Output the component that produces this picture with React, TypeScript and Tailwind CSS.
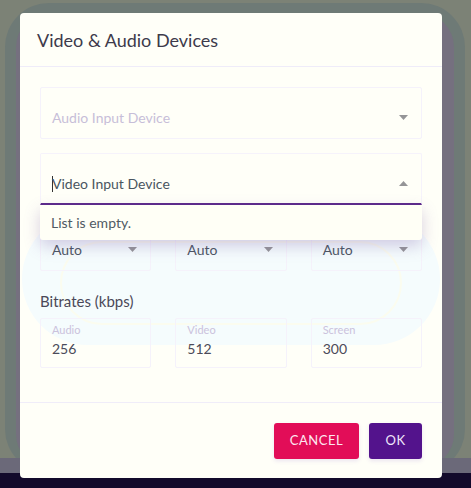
import React from 'react';

const font = { fontFamily: 'Lato, "Noto Sans", sans-serif' };

function Caret({ up = false }: { up?: boolean }) {
  return (
    <svg width="9" height="5" viewBox="0 0 9 5" className="shrink-0">
      <path d={up ? 'M0 5 L4.5 0 L9 5 Z' : 'M0 0 L4.5 5 L9 0 Z'} fill="#959597" />
    </svg>
  );
}

function SmallSelect({ value }: { value: string }) {
  return (
    <div className="h-[52px] border border-[#f5f2fb] rounded-[2px] flex items-end pb-[10px] pl-[11px] pr-[13px] justify-between">
      <span className="text-[14px] text-[#4b5561] leading-[20px]">{value}</span>
      <span className="mb-[8px]"><Caret /></span>
    </div>
  );
}

function BitrateField({ label, value }: { label: string; value: string }) {
  return (
    <div className="h-[50px] border border-[#f5f2fb] rounded-[2px] pl-[11px] pt-[3px]">
      <div className="text-[11px] leading-[16px] text-[#cbc2dc]">{label}</div>
      <div className="text-[14px] leading-[20px] text-[#4b4b5a] mt-[1px]">{value}</div>
    </div>
  );
}

export default function App() {
  return (
    <div className="relative w-[471px] h-[488px] overflow-hidden bg-[#7c8276]" style={font}>
      {/* backdrop layers */}
      <div className="absolute left-[5px] top-[3px] w-[460px] h-[470px] rounded-[44px] bg-[#6e7a76]"></div>
      <div className="absolute left-[16px] top-[13px] w-[438px] h-[455px] rounded-[34px] bg-[#75707f]"></div>
      <div className="absolute left-0 top-[458px] w-[471px] h-[16px] bg-[#6b6979]"></div>
      <div className="absolute left-0 top-[473px] w-[471px] h-[15px] bg-[#130a2b]"></div>

      <div className="relative ml-[20px] mt-[13px] w-[422px] h-[465px] bg-[#fffff8] rounded-[4px] overflow-hidden flex flex-col">
        {/* faint ghost blob */}
        <div className="absolute left-[2px] top-[200px] w-[418px] h-[132px] rounded-[70px] bg-[#f5fcfd]"></div>
        <div className="absolute left-[40px] top-[228px] w-[342px] h-[84px] rounded-[50px] border-2 border-[#fbfcef]"></div>

        <div className="h-[54px] px-[17px] flex items-center border-b border-[#efecf9] relative">
          <h1 className="text-[18px] text-[#3d3a4b] leading-[24px] pt-[1px]">Video &amp; Audio Devices</h1>
        </div>

        <div className="px-[20px] pt-[20px] flex flex-col relative flex-1">
          <div className="h-[52px] border border-[#f5f2fb] rounded-[2px] flex items-end pb-[10px] pl-[11px] pr-[13px] justify-between">
            <span className="text-[14px] leading-[20px] text-[#c7bed8]">Audio Input Device</span>
            <span className="mb-[8px]"><Caret /></span>
          </div>

          <div className="relative mt-[14px]">
            <div className="h-[52px] border border-[#f6f3fb] border-b-2 border-b-[#5c2a8a] rounded-t-[2px] flex items-end pb-[9px] pl-[11px] pr-[13px] justify-between">
              <span className="text-[14px] leading-[20px] text-[#4a5560] flex items-center">
                <span className="inline-block w-px h-[16px] bg-[#333] mr-[-1px]"></span>Video Input Device
              </span>
              <span className="mb-[8px]"><Caret up /></span>
            </div>
            <div className="absolute left-0 right-0 top-[52px] h-[35px] bg-[#fffff6] rounded-b-[3px] shadow-[0_6px_16px_rgba(110,80,160,0.28)] z-10 flex items-center pl-[11px]">
              <span className="text-[14px] text-[#4f5a63] leading-[20px]">List is empty.</span>
            </div>
          </div>

          <div className="grid grid-cols-3 gap-[24px] mt-[14px]">
            <SmallSelect value="Auto" />
            <SmallSelect value="Auto" />
            <SmallSelect value="Auto" />
          </div>

          <div className="mt-[20px] text-[15px] leading-[20px] text-[#4a4858]">Bitrates (kbps)</div>

          <div className="grid grid-cols-3 gap-[24px] mt-[7px]">
            <BitrateField label="Audio" value="256" />
            <BitrateField label="Video" value="512" />
            <BitrateField label="Screen" value="300" />
          </div>
        </div>

        <div className="h-[76px] border-t border-[#f0edf9] flex items-start justify-end gap-[10px] px-[20px] pt-[20px] relative">
          <button className="w-[85px] h-[36px] rounded-[3px] bg-[#e20d58] text-[#fde8f0] text-[13px] tracking-[0.5px] shadow-[0_2px_4px_rgba(120,80,200,0.15)]">CANCEL</button>
          <button className="w-[53px] h-[36px] rounded-[3px] bg-[#53138c] text-[#efe6fb] text-[13px] tracking-[0.5px] shadow-[0_2px_4px_rgba(120,80,200,0.15)]">OK</button>
        </div>
      </div>
    </div>
  );
}
